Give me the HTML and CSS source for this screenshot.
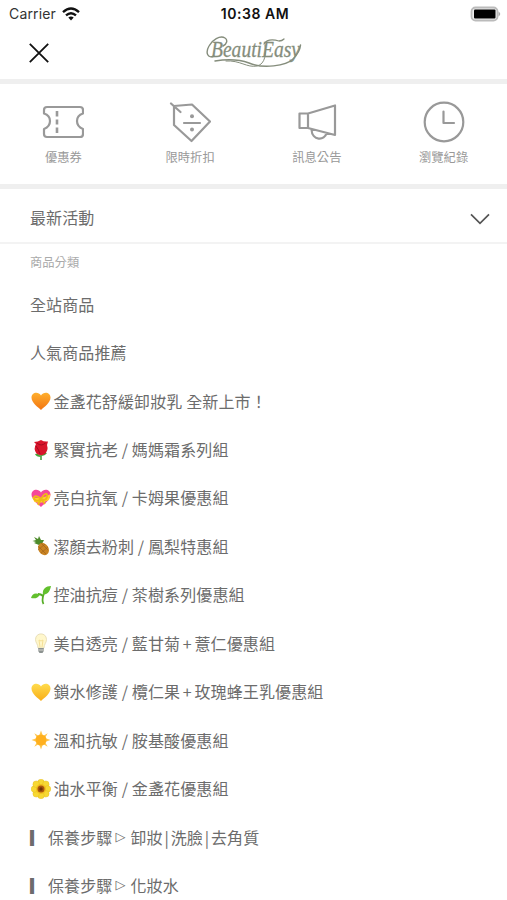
FILE: index.html
```html
<!DOCTYPE html>
<html lang="zh-Hant">
<head>
  <meta charset="UTF-8">
  <meta name="viewport" content="width=device-width, initial-scale=1.0">
  <title>BeautiEasy</title>
  <link rel="stylesheet" href="styles.css">
</head>
<body>
<div class="status">
  <div class="carrier">Carrier
    <svg width="18" height="14" viewBox="0 0 18 14"><g fill="none" stroke="#111" stroke-width="2.4"><path d="M1 5.2Q9-2 17 5.2"/><path d="M4 8.4Q9 4 14 8.4"/></g><path d="M6.3 10.6Q9 8.4 11.7 10.6L9 13.4z" fill="#111"/></svg>
  </div>
  <div class="clock">10:38 AM</div>
  <svg class="battery" width="31" height="16" viewBox="0 0 31 16"><rect x="1.500" y="1.500" width="26" height="13" rx="4" fill="#eee" stroke="#bbb" stroke-width="1.800"/><rect x="4" y="3.500" width="21.500" height="9" rx="1" fill="#000"/><path d="M28.500 5.500Q32 8 28.500 10.500z" fill="#aaa"/></svg>
</div>

<header class="header">
  <svg class="close" width="20" height="20" viewBox="0 0 20 20"><path d="M.8.8 19.2 19.2M19.2.8.8 19.2" stroke="#111" stroke-width="1.8"/></svg>
  <svg class="logo" width="100" height="34" viewBox="0 0 100 34">
    <text class="logo-text" x="7" y="21" textLength="89" lengthAdjust="spacingAndGlyphs">BeautiEasy</text>
    <g fill="none" stroke="#858d7c" stroke-linecap="round">
      <path d="M10 20C4 23 1 17 5 10C8 4 16-1 21 2C24 4 23 8 19 10" stroke-width="1.4"/>
      <path d="M11 25C24 23 34 23 45 27C59 33 82 30 89 23C93 19 96 14 96.500 9" stroke-width="1.5"/>
      <path d="M22 25C36 24 43 32 53 30C62 28 62 16 61 9" stroke-width="1"/>
      <path d="M60 8C63 3 68 3 75 5C78 5 79 4 80 3" stroke-width="1.3"/>
    </g>
  </svg>
</header>

<nav class="shortcuts">
  <a class="shortcut">
    <svg width="42" height="42" viewBox="0 0 42 42"><path d="M5 6H38Q41 6 41 9V12.500C33 15 33 25 41 28V33Q41 36 38 36H5Q2 36 2 33V28C10 25 10 15 2 12.500V9Q2 6 5 6z"/><path class="dashes" d="M15 10V15.500M15 18.500V23.500M15 26.500V32"/></svg>
    <span>優惠券</span>
  </a>
  <a class="shortcut">
    <svg width="42" height="42" viewBox="0 0 42 42"><path d="M5 5 23 3.500 41 20.500 22.500 40 5 24zM2 2.500 11.500 11M15 22H31"/><g fill="#999" stroke="none"><circle cx="23" cy="15.300" r="2"/><circle cx="23" cy="28.500" r="2"/></g></svg>
    <span>限時折扣</span>
  </a>
  <a class="shortcut">
    <svg width="42" height="42" viewBox="0 0 42 42"><path d="M3.500 12.500H12V27H3.500zM12 12.500 39 4.500V34L12 27M15.500 28.500C16 40 29 40 30.500 32"/></svg>
    <span>訊息公告</span>
  </a>
  <a class="shortcut">
    <svg width="42" height="42" viewBox="0 0 42 42"><circle cx="21" cy="21" r="19.3"/><path d="M20.5 10.500V22H31"/></svg>
    <span>瀏覽紀錄</span>
  </a>
</nav>

<div class="news">
  <span>最新活動</span>
  <svg width="20" height="12" viewBox="0 0 20 12"><path d="M1 1.3 10 10.3 19 1.3" fill="none" stroke="#555" stroke-width="1.7"/></svg>
</div>

<div class="category">商品分類</div>
<ul class="menu">
  <li>全站商品</li>
  <li>人氣商品推薦</li>
  <li>
    <svg class="emoji" viewBox="0 0 20 20"><defs><linearGradient id="orange" x2="0" y2="1"><stop stop-color="#ffb02e"/><stop offset="1" stop-color="#f27412"/></linearGradient></defs><path d="M10 19C7 16 .5 12 .5 6.500C.5 1 7.500 0 10 4.500C12.500 0 19.500 1 19.500 6.500C19.500 12 13 16 10 19z" fill="url(#orange)"/></svg>
    金盞花舒緩卸妝乳 全新上市！
  </li>
  <li>
    <svg class="emoji" viewBox="0 0 20 20"><path d="M10 12V20" stroke="#3c9a35" stroke-width="1.5"/><path d="M10 17Q5 17 4 14Q8 13 10 17zM10 16Q14 16 16 13Q12 12 10 16z" fill="#48a43a"/><path d="M3 2Q7 2 10 0Q13 2 17 1.500L16 5Q18 11 13 14.500Q9 16.500 5.500 13.500Q2 9 5 4z" fill="#d8152b"/><path d="M6 3Q10 7 14.500 3M5 6Q8 10 9 14" fill="none" stroke="#a30b20"/></svg>
    緊實抗老 / 媽媽霜系列組
  </li>
  <li>
    <svg class="emoji" viewBox="0 0 20 20"><path d="M10 19C7 16 .5 12 .5 6.500C.5 1 7.500 0 10 4.500C12.500 0 19.500 1 19.500 6.500C19.500 12 13 16 10 19z" fill="#f5479a"/><path d="M1 9Q10 12 19.500 6L18 12Q11 16 3.500 14z" fill="#ffd42d"/><path d="M10 11C3 5 2 10 4 12S8 12 10 11C14 4 17 5 16 9S12 12 10 11L7 17M10 11L14 16" fill="none" stroke="#efb915" stroke-width="1.800"/></svg>
    亮白抗氧 / 卡姆果優惠組
  </li>
  <li>
    <svg class="emoji" viewBox="0 0 20 20"><path d="M8 9 3 7 5 6 1.500 5 5 4 3 1 7 3 8 0 10 4 13 4 11 8z" fill="#4d8b2b"/><ellipse cx="12.500" cy="13" rx="5" ry="6.500" transform="rotate(-32 12.500 13)" fill="#c98322"/><path d="M7 10 15 18M10 7 17 14M7 14 14 8M10 17 17 11" stroke="#9b5e19" stroke-width=".6"/></svg>
    潔顏去粉刺 / 鳳梨特惠組
  </li>
  <li>
    <svg class="emoji" viewBox="0 0 20 20"><path d="M12.500 19C10.500 16 12 11 13 8M12 11Q10 9 7 9" fill="none" stroke="#55ad25" stroke-width="1.800"/><path d="M12 9.500C11 4 15 1 20 1C19 6 17 10 12 9.500zM9 9.500C4 7 1 9 0 13C4 14 7 13 9 9.500z" fill="#62c02d"/></svg>
    控油抗痘 / 茶樹系列優惠組
  </li>
  <li>
    <svg class="emoji" viewBox="0 0 20 20"><path d="M7 15C7 11 4.500 10 4.500 6.500C4.500-1 15.500-1 15.500 6.500C15.500 10 13 11 13 15z" fill="#fff7cc" stroke="#e3d8ae" stroke-width=".8"/><path d="M9 14 8 7 10 8 12 7 11 14" fill="none" stroke="#f5df95"/><path d="M7.200 15H12.800V18L11.500 20H8.500L7.200 18z" fill="#8c9290"/><path d="M7.200 17H12.800" stroke="#d5d5d0"/></svg>
    美白透亮 / 藍甘菊<span class="plus">+</span>薏仁優惠組
  </li>
  <li>
    <svg class="emoji" viewBox="0 0 20 20"><defs><linearGradient id="yellow" x2="0" y2="1"><stop stop-color="#ffdc4e"/><stop offset="1" stop-color="#f8ad16"/></linearGradient></defs><path d="M10 19C7 16 .5 12 .5 6.500C.5 1 7.500 0 10 4.500C12.500 0 19.500 1 19.500 6.500C19.500 12 13 16 10 19z" fill="url(#yellow)"/></svg>
    鎖水修護 / 欖仁果<span class="plus">+</span>玫瑰蜂王乳優惠組
  </li>
  <li>
    <svg class="emoji" viewBox="0 0 20 20"><path d="M10 .5 12 6 16.700 3.300 14 8 19.500 10 14 12 16.700 16.700 12 14 10 19.500 8 14 3.300 16.700 6 12 .5 10 6 8 3.300 3.300 8 6z" fill="#ffc64d"/><circle cx="10" cy="10" r="5.500" fill="#ffb01e"/></svg>
    溫和抗敏 / 胺基酸優惠組
  </li>
  <li>
    <svg class="emoji" viewBox="0 0 20 20"><g fill="#f7d832" stroke="#e0b51b" stroke-width=".4"><circle cx="10" cy="3.500" r="3.300"/><circle cx="14.800" cy="5.200" r="3.300"/><circle cx="16.500" cy="10" r="3.300"/><circle cx="14.800" cy="14.800" r="3.300"/><circle cx="10" cy="16.500" r="3.300"/><circle cx="5.200" cy="14.800" r="3.300"/><circle cx="3.500" cy="10" r="3.300"/><circle cx="5.200" cy="5.200" r="3.300"/></g><circle cx="10" cy="10" r="5" fill="#f2be1c"/><circle cx="10" cy="10" r="3.500" fill="#a9550c"/><circle cx="10" cy="10" r="1.700" fill="#6e3108"/></svg>
    油水平衡 / 金盞花優惠組
  </li>
  <li><span class="mark">▎</span>保養步驟<span class="arrow">▷</span>卸妝<span class="pipe">|</span>洗臉<span class="pipe">|</span>去角質</li>
  <li><span class="mark">▎</span>保養步驟<span class="arrow">▷</span>化妝水</li>
</ul>
</body>
</html>
```

FILE: styles.css
```css
* {
  box-sizing: border-box;
}
body {
  margin: 0;
  height: 900px;
  overflow: hidden;
  background: #fff;
  color: #6c6c6c;
  font-family: "Noto Sans CJK TC", sans-serif;
}
svg {
  flex: none;
}
.status {
  display: grid;
  grid-template-columns: 1fr auto 1fr;
  align-items: center;
  height: 27px;
  padding: 0 6px 0 9px;
  font-family: Inter, sans-serif;
  font-size: 14px;
  color: #333;
}
.carrier {
  display: flex;
  align-items: center;
  gap: 6px;
  letter-spacing: 0.15px;
}
.clock {
  font-size: 14px;
  font-weight: 600;
  letter-spacing: 0.55px;
  color: #111;
}
.battery {
  justify-self: end;
}
.header {
  display: grid;
  grid-template-columns: 1fr auto 1fr;
  align-items: center;
  height: 57px;
  padding: 0 29px;
  border-bottom: 5px solid #efefef;
}
.logo-text {
  font-family: "Liberation Serif", serif;
  font-size: 24px;
  font-style: italic;
  fill: #858d7c;
  stroke: #858d7c;
  stroke-width: 0.3px;
}
.shortcuts {
  display: grid;
  grid-template-columns: repeat(4, 1fr);
  height: 105px;
  padding-top: 17px;
  border-bottom: 5px solid #efefef;
}
.shortcut {
  display: flex;
  flex-direction: column;
  align-items: center;
  gap: 5px;
  font-size: 12.3px;
  line-height: 18px;
  color: #999;
}
.shortcut svg {
  fill: none;
  stroke: #999;
  stroke-width: 2.2;
  stroke-linejoin: round;
  stroke-linecap: round;
}
.shortcut .dashes {
  stroke-width: 2.6;
  stroke-linecap: butt;
}
.news {
  display: flex;
  align-items: center;
  justify-content: space-between;
  height: 55px;
  padding: 4px 17px 0 30px;
  border-bottom: 2px solid #f3f3f3;
  font-size: 16px;
  letter-spacing: 0.1px;
}
.news span {
  padding-bottom: 2px;
}
.news svg {
  margin-top: 3px;
}
.category {
  height: 36px;
  padding: 0 30px;
  font-size: 12.3px;
  line-height: 36px;
  color: #aaa;
}
.menu {
  margin: 0;
  padding: 0 30px;
  list-style: none;
}
.menu li {
  display: flex;
  align-items: center;
  height: 48.45px;
  padding-bottom: 1px;
  font-size: 16px;
  letter-spacing: 0.12px;
  white-space: nowrap;
}
.emoji {
  width: 20px;
  height: 20px;
  margin: 1px 2.5px 0 1px;
}
.plus {
  width: 14.3px;
  text-align: center;
}
.mark {
  width: 18px;
}
.arrow {
  width: 18px;
  padding-left: 3px;
  font-family: "DejaVu Sans", sans-serif;
  font-size: 13px;
}
.pipe {
  width: 8px;
  text-align: center;
}
```
